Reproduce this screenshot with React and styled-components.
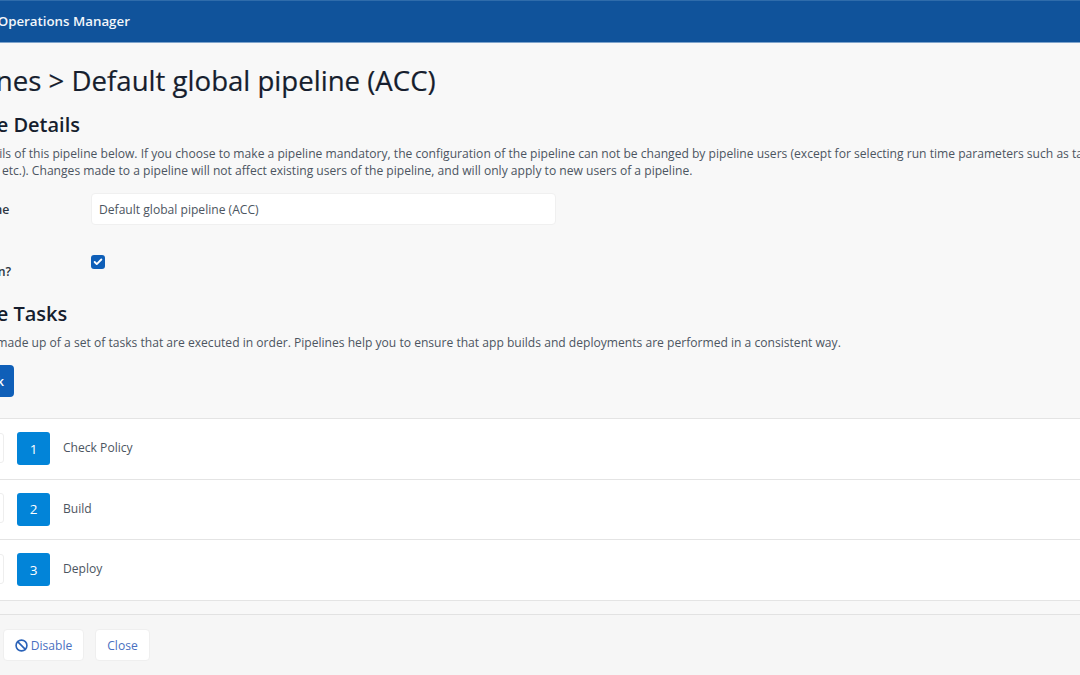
import React from "react";
import styled, { createGlobalStyle } from "styled-components";
import { Ban, Check, GripVertical } from "lucide-react";

const Global = createGlobalStyle`
  html, body { margin: 0; padding: 0; background: #f8f8f8; overflow: hidden; }
  body { font-family: "Open Sans", "Liberation Sans", sans-serif; color: #4c5561; }
`;
const Page = styled.div`
  width: 1080px; height: 675px; overflow: hidden; display: flex; flex-direction: column;
`;
const Header = styled.header`
  flex: none; height: 41px; background: #10539b; border-top: 1px solid #2f6cab;
  display: flex; align-items: center; box-shadow: 0 1px 0 #7fa4cc;
`;
const Brand = styled.div`
  margin-left: -62px; color: #f2f6fa; font-size: 13.3px; font-weight: 600; white-space: nowrap; margin-top: -2px;
`;
const Main = styled.main`
  flex: none; height: 572px; margin-left: -77px; width: 1240px; display: flex; flex-direction: column;
`;
const Title = styled.h1`
  margin: 19px 0 0 3px; height: 38px; line-height: 38px; font-size: 27.6px; font-weight: 500; color: #161e2e; white-space: nowrap; -webkit-text-stroke: 0.2px #161e2e;
`;
const Heading = styled.h2`
  margin: ${(p) => p.$top}px 0 0 8px; height: 28px; line-height: 28px; font-size: 20px; font-weight: 600; color: #161e2e; white-space: nowrap;
`;
const Para = styled.p`
  margin: 6px 0 0 ${(p) => p.$left}px; font-size: 12.1px; line-height: 17px; white-space: nowrap;
`;
const Line = styled.span`
  display: block;
`;
const Row = styled.div`
  display: grid; grid-template-columns: 168px 465px; align-items: ${(p) => p.$align || "center"};
  margin-top: ${(p) => p.$top}px;
`;
const Label = styled.label`
  font-size: 12.3px; line-height: 17px; font-weight: 600; color: #2b3441; white-space: nowrap;
  ${(p) => p.$low && "margin-top: 8px;"}
`;
const Input = styled.input`
  box-sizing: border-box; width: 465px; height: 32px; background: #fff; border: 1px solid #f0f0f0; border-radius: 4px;
  padding: 0 7px; font: 12.1px "Open Sans", sans-serif; color: #4c5561; outline: none;
`;
const CheckBox = styled.span`
  width: 14px; height: 14px; background: #0f5fb8; border-radius: 3px; display: flex; align-items: center; justify-content: center;
  color: #fff;
`;
const AddButton = styled.button`
  align-self: flex-start; margin-top: 14px; width: 91px; height: 32px; border: 0; border-radius: 4px; background: #0f5fb8;
  color: #fff; font: 600 12.1px "Open Sans", sans-serif; white-space: nowrap; padding: 0 10px 0 0; text-align: right;
`;
const TaskList = styled.div`
  margin-top: 21px; background: #fff; border-top: 1px solid #e4e4e4;
`;
const Task = styled.div`
  height: 59.6px; border-bottom: 1px solid #e4e4e4; display: flex; align-items: center; padding-left: 94px; gap: 13px;
`;
const Grip = styled.span`
  box-sizing: border-box; width: 35px; height: 30px; margin: -2px 0 0 -48px; border: 1px solid #eeeeee; border-radius: 3px;
  display: flex; align-items: center; justify-content: center; color: #999; background: #fff; flex: none;
`;
const Num = styled.span`
  width: 33px; height: 33px; background: #0284d8; border-radius: 3px; color: #fff; font-size: 13.5px;
  display: flex; align-items: center; justify-content: center; flex: none;
`;
const TaskName = styled.span`
  font-size: 12.1px; margin-top: -2px;
`;
const Footer = styled.footer`
  flex: 1; background: #f6f6f6; border-top: 1px solid #e2e2e2; display: flex; align-items: flex-start; gap: 11px; padding: 14px 0 0 3px;
`;
const FootBtn = styled.button`
  box-sizing: border-box; height: 32px; width: ${(p) => p.$w}px; background: #fff; border: 1px solid #efefef; border-radius: 4px;
  color: #4a6fc0; font: 12.1px "Open Sans", sans-serif; display: flex; align-items: center; justify-content: center; gap: 3px; padding: 0;
`;

const tasks = ["Check Policy", "Build", "Deploy"];

export default function App() {
  return (
    <>
      <Global />
      <Page>
        <Header><Brand>Platform Operations Manager</Brand></Header>
        <Main>
          <Title>Pipelines &gt; Default global pipeline (ACC)</Title>
          <Heading $top={12}>Pipeline Details</Heading>
          <Para $left={-4}>
            <Line>Enter the details of this pipeline below. If you choose to make a pipeline mandatory, the configuration of the pipeline can not be changed by pipeline users (except for selecting run time parameters such as target,</Line>
            <Line>build number, etc.). Changes made to a pipeline will not affect existing users of the pipeline, and will only apply to new users of a pipeline.</Line>
          </Para>
          <Row $top={14}>
            <Label>Pipeline Name</Label>
            <Input readOnly value="Default global pipeline (ACC)" />
          </Row>
          <Row $top={30} $align="start">
            <Label $low>Enable on run?</Label>
            <CheckBox><Check size={10} strokeWidth={4.5} /></CheckBox>
          </Row>
          <Heading $top={20}>Pipeline Tasks</Heading>
          <Para $left={-2}>Pipelines are made up of a set of tasks that are executed in order. Pipelines help you to ensure that app builds and deployments are performed in a consistent way.</Para>
          <AddButton>Add Task</AddButton>
          <TaskList>
            {tasks.map((t, i) => (
              <Task key={t}>
                <Grip><GripVertical size={14} /></Grip>
                <Num>{i + 1}</Num>
                <TaskName>{t}</TaskName>
              </Task>
            ))}
          </TaskList>
        </Main>
        <Footer>
          <FootBtn $w={81}><Ban size={13} strokeWidth={3} color="#2a62b8" />Disable</FootBtn>
          <FootBtn $w={55}>Close</FootBtn>
        </Footer>
      </Page>
    </>
  );
}
